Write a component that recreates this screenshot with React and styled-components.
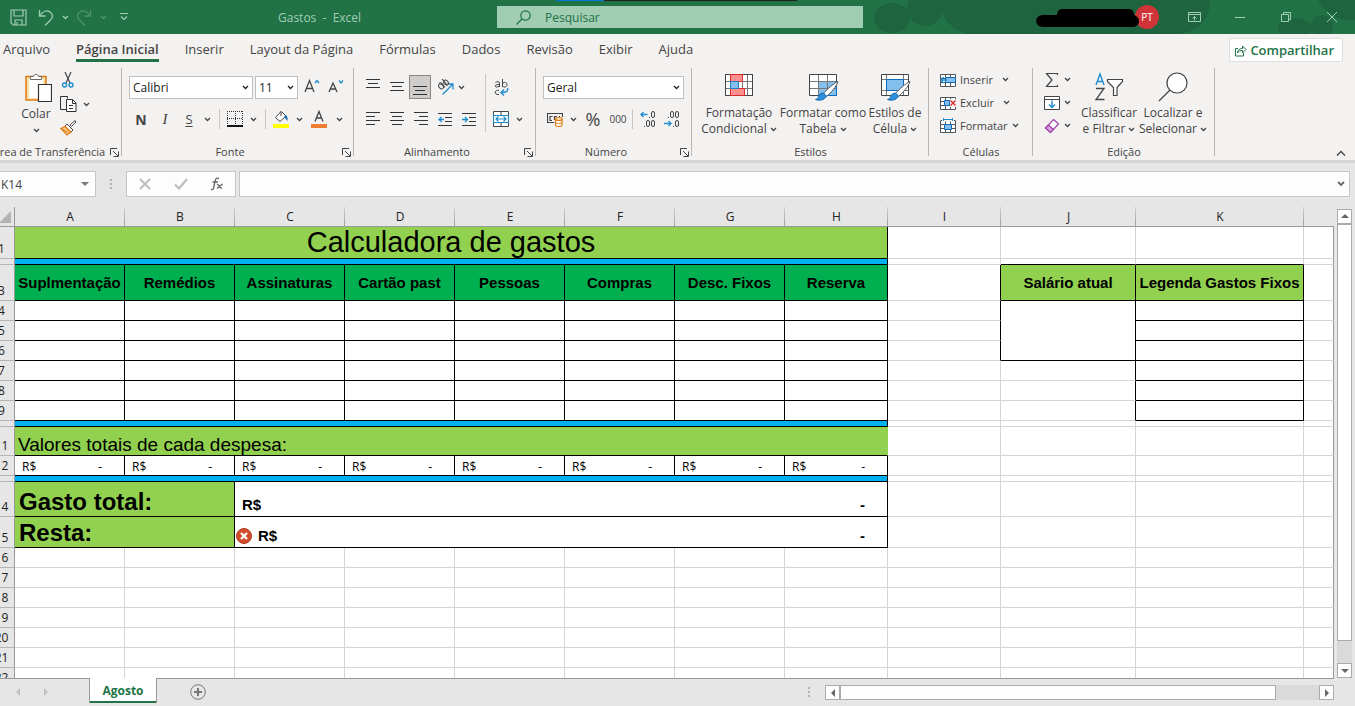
import React from "react";
import styled, { createGlobalStyle, css } from "styled-components";

const UI_FONT = '"Open Sans", "Noto Sans", sans-serif';
const INK = "#444444";
const BLUE = "#1e8bcd";
const GREEN = "#217346";

const GlobalStyle = createGlobalStyle`
  *, *::before, *::after { box-sizing: border-box; }
  body { margin: 0; overflow: hidden; font-family: ${UI_FONT}; font-size: 12px; color: ${INK}; background: #e6e6e6; }
  button, input, select { font: inherit; color: inherit; margin: 0; padding: 0; border: 0; background: none; outline: none; }
  svg { display: block; flex: none; }
`;

/* ---------- shell ---------- */
const Shell = styled.div`
  display: flex;
  flex-direction: column;
  height: 100vh;
  overflow: hidden;
`;

/* ---------- title bar ---------- */
const TitleBar = styled.header`
  position: relative;
  display: grid;
  grid-template-columns: 497fr 366fr 492fr;
  align-items: center;
  height: 34px;
  flex: none;
  background: ${GREEN};
  color: #a0cdb4;
`;
const TopStrip = styled.div`
  position: absolute;
  top: 0;
  left: 41%;
  width: 241px;
  height: 1px;
  background: linear-gradient(90deg, #0078d7 48px, #1f1f1f 48px);
`;
const Decoration = styled.svg`
  position: absolute;
  top: 0;
  right: 0;
  height: 34px;
  width: 485px;
`;
const QuickAccess = styled.div`
  display: flex;
  align-items: center;
  padding-left: 5px;
`;
const QuickButton = styled.button`
  display: flex;
  align-items: center;
  justify-content: center;
  width: ${(p) => p.$w}px;
  height: 32px;
  opacity: ${(p) => (p.disabled ? 0.35 : 1)};
`;
const DocTitle = styled.h1`
  flex: 1;
  margin: 0 0 0 137px;
  font-size: 12px;
  font-weight: 400;
  white-space: pre;
`;
const SearchBox = styled.label`
  position: relative;
  display: flex;
  align-items: center;
  gap: 14px;
  height: 22px;
  padding-left: 19px;
  background: #a0cdb4;
  color: ${GREEN};
  input { flex: 1; min-width: 0; height: 22px; }
  input::placeholder { color: ${GREEN}; opacity: 1; }
`;
const WindowArea = styled.div`
  position: relative;
  display: flex;
  align-items: center;
  justify-content: flex-end;
`;
const Avatar = styled.div`
  display: grid;
  place-items: center;
  width: 24px;
  height: 24px;
  margin-left: -5px;
  margin-right: 12px;
  border-radius: 50%;
  background: #d13438;
  color: #fff;
  font-size: 10px;
`;
const Redaction = styled.svg`
  position: relative;
  z-index: 1;
`;
const WindowButton = styled.button`
  display: grid;
  place-items: center;
  width: 46px;
  height: 32px;
  color: #a0cdb4;
`;

/* ---------- ribbon ---------- */
const TabBar = styled.nav`
  display: flex;
  align-items: center;
  flex: none;
  height: 32px;
  padding: 0 12px 0 3px;
  gap: 26px;
  background: #f3f2f1;
  font-size: 13px;
`;
const TabLink = styled.a`
  padding: 2px 0 1px;
  line-height: 18px;
  color: ${INK};
  text-decoration: none;
  white-space: nowrap;
  border-bottom: 3px solid transparent;
  ${(p) =>
    p.$active &&
    css`
      font-weight: 600;
      border-color: ${GREEN};
    `}
`;
const ShareButton = styled.button`
  display: flex;
  align-items: center;
  gap: 3px;
  height: 24px;
  margin-left: auto;
  padding: 0 8px 0 4px;
  background: #fff;
  border: 1px solid #e1dfdd;
  border-radius: 2px;
  color: ${GREEN};
  font-weight: 600;
`;
const Ribbon = styled.section`
  display: flex;
  flex: none;
  height: 97px;
  padding-top: 2px;
  background: #f3f2f1;
  border-bottom: 3px solid #d4d4d4;
  overflow: hidden;
`;
const Group = styled.section`
  display: flex;
  flex-direction: column;
  flex: none;
  width: ${(p) => p.$w}px;
  margin-left: ${(p) => p.$shift || 0}px;
  background: linear-gradient(#b8b6b4, #b8b6b4) right top / 1px 88px no-repeat;
`;
const GroupBody = styled.div`
  display: flex;
  flex: 1;
  padding-left: ${(p) => p.$pad}px;
`;
const GroupFooter = styled.div`
  display: flex;
  align-items: center;
  height: 16px;
  font-size: 11px;
  span { flex: 1; text-align: center; line-height: 16px; white-space: nowrap; }
  button { width: 16px; height: 16px; display: grid; place-items: center; }
`;
const Stack = styled.div`
  display: flex;
  flex-direction: column;
  gap: ${(p) => p.$gap || 0}px;
  padding-top: ${(p) => p.$top || 0}px;
  width: ${(p) => (p.$w ? p.$w + "px" : "auto")};
`;
const Row = styled.div`
  display: flex;
  align-items: center;
  height: 24px;
  gap: ${(p) => p.$gap || 0}px;
`;
const Tool = styled.button`
  display: flex;
  align-items: center;
  justify-content: center;
  gap: 4px;
  flex: none;
  width: ${(p) => p.$w || 24}px;
  height: ${(p) => p.$h || 24}px;
  font-size: ${(p) => p.$size || 12}px;
  font-weight: ${(p) => (p.$bold ? 700 : 400)};
  font-style: ${(p) => (p.$italic ? "italic" : "normal")};
  font-family: ${(p) => (p.$italic ? '"Liberation Serif", serif' : "inherit")};
  text-decoration: ${(p) => (p.$underline ? "underline" : "none")};
  text-underline-offset: 2px;
  white-space: nowrap;
  ${(p) =>
    p.$pressed &&
    css`
      background: #cfcdcb;
      box-shadow: inset 0 0 0 1px #8a8886;
    `}
`;
const LineTool = styled(Tool)`
  justify-content: flex-start;
  width: auto;
  height: 23px;
  font-size: 11px;
  span { margin-right: ${(p) => p.$gap || 0}px; }
`;
const BigTool = styled.button`
  display: flex;
  flex-direction: column;
  align-items: center;
  flex: none;
  width: ${(p) => p.$w}px;
  padding-top: 4px;
  line-height: 16px;
  white-space: nowrap;
  svg { margin-bottom: 3px; }
`;
const CaptionRow = styled.span`
  display: flex;
  align-items: center;
  gap: 3px;
  height: 16px;
  svg { margin: 0; }
`;
const Divider = styled.span`
  width: 1px;
  height: ${(p) => p.$h || 20}px;
  margin: ${(p) => p.$m || "0 3px 0 6px"};
  background: #c8c6c4;
`;
const PickBox = styled.label`
  display: inline-grid;
  align-items: center;
  width: ${(p) => p.$w}px;
  height: 23px;
  background: #fff;
  border: 1px solid #c1bfbd;
  color: #222;
  select, svg { grid-area: 1 / 1; }
  select { appearance: none; width: 100%; height: 21px; padding-left: 3px; }
  svg { justify-self: end; margin-right: 3px; pointer-events: none; }
`;
const CollapseButton = styled.button`
  align-self: flex-end;
  margin: 0 7px 0 auto;
  padding: 4px 2px;
`;

/* ---------- formula bar ---------- */
const FormulaBar = styled.section`
  display: flex;
  flex: none;
  height: 44px;
  padding: 8px 5px 10px 0;
`;
const Framed = styled.div`
  display: flex;
  align-items: center;
  height: 26px;
  background: #fdfdfd;
  border: 1px solid #c6c6c6;
`;
const NameBox = styled(Framed)`
  width: 97px;
  margin-left: -1px;
  padding-right: 6px;
  input { width: 100%; padding-left: 1px; min-width: 0; }
`;
const FormulaButtons = styled(Framed)`
  width: 110px;
  button { flex: 1; display: grid; place-items: center; height: 24px; }
`;
const FormulaInput = styled(Framed)`
  flex: 1;
  margin-left: 3px;
  padding-right: 4px;
  input { flex: 1; padding: 0 6px; }
`;
const DotHandle = styled.div`
  display: flex;
  flex-direction: column;
  justify-content: center;
  align-items: center;
  gap: 2px;
  width: ${(p) => p.$w}px;
  i { width: 2px; height: 2px; background: #b0b0b0; }
`;

/* ---------- sheet ---------- */
const SheetArea = styled.main`
  display: flex;
  flex: 1;
  min-height: 0;
`;
const SheetView = styled.div`
  flex: 1;
  min-width: 0;
  overflow: hidden;
`;
const SheetTable = styled.table`
  width: calc(100% + 11px);
  margin-left: -11px;
  table-layout: fixed;
  border-collapse: separate;
  border-spacing: 0;
  color: #000;
`;
const Col = styled.col`
  width: ${(p) => (p.$w ? p.$w + "px" : "auto")};
`;
const ColHead = styled.th`
  height: 20px;
  padding: 0;
  font-weight: 400;
  line-height: 18px;
  color: #222;
  background: linear-gradient(#d0d0d0, #a0a0a0) right top / 1px 100% no-repeat #e6e6e6;
  border-bottom: 1px solid #999;
  &:last-child { background: #e6e6e6; }
`;
const RowHead = styled.th`
  height: ${(p) => p.$h}px;
  padding: 0;
  font-weight: 400;
  line-height: ${(p) => (p.$h < 10 ? 4 : 18)}px;
  color: #222;
  vertical-align: bottom;
  background: #e6e6e6;
  border-right: 1px solid #999;
  border-bottom: 1px solid #b5b5b5;
`;
const Corner = styled(ColHead)`
  background: #e6e6e6;
  border-right: 1px solid #999;
  svg { margin-left: auto; margin-right: 3px; }
`;
const Cell = styled.td`
  padding: 0;
  background: ${(p) => p.$bg || "#fff"};
  border-right: 1px solid ${(p) => p.$r || "#d4d4d4"};
  border-bottom: 1px solid ${(p) => p.$b || "#d4d4d4"};
  font-family: "Liberation Sans", Arial, sans-serif;
  line-height: 1;
  white-space: nowrap;
  &:last-child { border-right-color: #999; }
`;
const TitleCell = styled(Cell)`
  font-size: 29px;
  text-align: center;
`;
const HeadingCell = styled(Cell)`
  font-size: 15px;
  font-weight: 700;
  text-align: center;
`;
const SectionCell = styled(Cell)`
  font-size: 19px;
  padding: 7px 0 0 3px;
`;
const TotalLabelCell = styled(Cell)`
  font-size: 24px;
  font-weight: 700;
  padding: ${(p) => p.$top}px 0 0 4px;
`;
const Money = styled.div`
  display: flex;
  align-items: center;
  justify-content: space-between;
  padding: 2px 22px 0 7px;
  line-height: 16px;
  font-family: ${UI_FONT};
`;
const BigMoney = styled(Money)`
  justify-content: flex-start;
  gap: 6px;
  padding: ${(p) => p.$top}px 22px 0 ${(p) => p.$left}px;
  font-family: "Liberation Sans", Arial, sans-serif;
  font-size: 15px;
  font-weight: 700;
  span:last-child { margin-left: auto; }
`;
const VScroll = styled.div`
  display: flex;
  flex-direction: column;
  flex: none;
  width: 21px;
  padding: 2px 3px 0 3px;
`;
const ScrollButton = styled.button`
  display: grid;
  place-items: center;
  flex: none;
  width: 15px;
  height: 15px;
  background: #fff;
  border: 1px solid #ababab;
`;
const Track = styled.div`
  display: flex;
  flex-direction: ${(p) => (p.$row ? "row" : "column")};
  flex: 1;
  background: #dadada;
`;
const Thumb = styled.div`
  flex: 0 0 ${(p) => p.$size}%;
  background: #fff;
  border: 1px solid #ababab;
`;

/* ---------- sheet tabs ---------- */
const BottomBar = styled.footer`
  display: flex;
  flex: none;
  height: 28px;
  padding-right: 21px;
  background: linear-gradient(#999, #999) left top / calc(100% - 21px) 1px no-repeat #e6e6e6;
`;
const NavArrows = styled.div`
  display: flex;
  align-items: center;
  width: 89px;
  padding: 0 0 1px 4px;
  button { width: 28px; height: 20px; display: grid; place-items: center; }
`;
const SheetTab = styled.a`
  height: 25px;
  width: 68px;
  text-align: center;
  line-height: 26px;
  font-weight: 700;
  color: ${GREEN};
  text-decoration: none;
  background: #fff;
  border: solid #999;
  border-width: 0 1px;
  box-shadow: inset 0 -2px 0 ${GREEN};
`;
const AddSheet = styled.button`
  width: 82px;
  display: grid;
  place-items: center;
`;
const HScroll = styled.div`
  display: flex;
  width: 509px;
  height: 15px;
  margin-top: 7px;
`;
const Spacer = styled.div`
  flex: 1;
`;

/* ---------- drawings ---------- */
const Icon = ({ w = 16, h = w, children, ...rest }) => (
  <svg width={w} height={h} viewBox={`0 0 ${w} ${h}`} fill="none" stroke={INK} strokeWidth="1" aria-hidden="true" {...rest}>
    {children}
  </svg>
);
const Chevron = ({ color = INK }) => (
  <Icon w={7} h={5} stroke={color} strokeWidth="1.3">
    <path d="M1 1l2.5 2.5L6 1" />
  </Icon>
);
const Launcher = () => (
  <Icon w={9}>
    <path d="M.5 7V.5H7M3 3l5 5M8.500 3.500v5h-5" />
  </Icon>
);
const Lines = ({ rows }) => (
  <Icon w={14} h={16} stroke="#333">
    {rows.map(([x1, x2, y]) => (
      <path key={y} d={`M${x1} ${y}.5H${x2}`} />
    ))}
  </Icon>
);
const Triangle = ({ dir, color = "#666" }) => {
  const d = { up: "M0 5L4 1l4 4z", down: "M0 2h8L4 6z", left: "M6 0v8L2 4z", right: "M2 0v8l4-4z" }[dir];
  return (
    <Icon w={8} stroke="none">
      <path d={d} fill={color} />
    </Icon>
  );
};
const Brush = () => (
  <>
    <path d="M31 9.500c-3 1-12 8.500-14.500 12l3 3C23 21.500 30 14 31 9.500z" fill="#fff" stroke="#555" />
    <path d="M16.500 21c-3 0-4.500 2-5 4-.5 1.500-1.500 2-3 2.500 4 1.500 9.500.5 11-3.500z" fill="#2f8fd8" stroke="#0f6cbd" />
  </>
);
const GridIcon = ({ children }) => (
  <Icon w={32} h={30} stroke="#777">
    <path d="M2.500 2.500h27v21h-27z" fill="#fff" stroke="#444" />
    {children}
  </Icon>
);
const ConditionalIcon = () => (
  <GridIcon>
    <path d="M7.500 3v20M19.500 3v20M24.500 3v20M3 9.500h26M3 16.500h26" />
    <path d="M2.500 2.500h27v21h-27z" stroke="#444" />
    <path d="M7.500 2.500h12v7h-12zM7.500 16.500h14v7h-14z" fill="#ff8f8f" stroke="#d92b2b" />
    <path d="M7.500 9.500h8v7h-8z" fill="#83beec" stroke="#1e7fc8" />
  </GridIcon>
);
const TableIcon = () => (
  <GridIcon>
    <path d="M11.500 9.500h18v14h-18z" fill="#83beec" stroke="#0f6cbd" />
    <path d="M11.500 3v20M20.500 3v20M3 9.500h26M3 16.500h26" />
    <Brush />
  </GridIcon>
);
const CellStyleIcon = () => (
  <GridIcon>
    <path d="M7.500 3v20M24.500 3v20M3 7.500h26M3 18.500h26" />
    <path d="M7.500 7.500h17v11h-17z" fill="#83beec" stroke="#0f6cbd" />
    <Brush />
  </GridIcon>
);
const SmallGrid = ({ children }) => (
  <Icon>
    <path d="M.5 2.500h15v12H.5zM5.500 2.500v12M10.500 2.500v12M.5 6.500h15M.5 10.500h15" fill="#fff" stroke="#555" />
    {children}
  </Icon>
);
const SaveIcon = () => (
  <Icon w={17} stroke="#a0cdb4" strokeWidth="1.2">
    <path d="M1 1h15v15H3l-2-2zM4 1v6h9V1M5 16v-5h7v5M7 13v3" />
  </Icon>
);
const UndoIcon = ({ flip }) => (
  <Icon w={16} h={17} stroke="#a0cdb4" strokeWidth="1.300" transform={flip ? "scale(-1 1)" : undefined}>
    <path d="M1.500 1v6h6M2 6.500C5 2 9 1 12 3s3.500 5 .5 8L7 16.500" />
  </Icon>
);
const PasteIcon = () => (
  <Icon w={32} h={31}>
    <g transform="translate(4 0)">
      <path d="M2 4.500h20V28H2z" fill="#fbdfa8" stroke="#e07b13" strokeWidth="1.500" />
      <path d="M5 7h14v19H5z" fill="#fff" stroke="none" />
      <path d="M6.500 7.500v-3h3C10 1.500 14 1.500 14.500 4.500h3v3z" fill="#fff" stroke="#666" />
      <path d="M14.500 12.500h13v17h-13z" fill="#fff" stroke="#333" strokeWidth="1.200" />
    </g>
  </Icon>
);
const CutIcon = () => (
  <Icon w={14} h={16}>
    <path d="M4 0l5 11M10 0L5 11" stroke="#444" strokeWidth="1.200" />
    <circle cx="3.500" cy="13" r="2" stroke={BLUE} strokeWidth="1.400" />
    <circle cx="10" cy="13" r="2" stroke={BLUE} strokeWidth="1.400" />
  </Icon>
);
const CopyIcon = () => (
  <Icon w={17} h={16} stroke="#333">
    <path d="M6.500 13.500h-6V.5h7v2" />
    <path d="M6.500 3.500h6l3.500 3.500v8.500H6.500zM12.500 3.500v4H16M9 9.500h4M9 12.500h4" fill="#fff" />
  </Icon>
);
const PainterIcon = () => (
  <Icon>
    <path d="M15 .5l-5 4.500 1.500 1.500L15.800 2zM7 4l6 6-2 2-6-6z" fill="#fff" stroke="#444" />
    <path d="M5 6.500L.8 8.500 7 15l4-3z" fill="#fbc98a" stroke="#e07b13" strokeWidth="1.300" />
    <path d="M3 9.500l5 3" stroke="#e07b13" />
  </Icon>
);
const BordersIcon = () => (
  <Icon>
    <path d="M.5 0v14M15.500 0v14M8.500 0v14M0 .5h16M0 7.500h16" stroke="#333" strokeDasharray="1 1" />
    <path d="M0 15h16" stroke="#111" strokeWidth="2" />
  </Icon>
);
const FillIcon = () => (
  <Icon h={18}>
    <path d="M8 1.500L2.500 7.500l4.500 4 6-5.500-4-4M8 6V1" fill="#fff" stroke="#444" />
    <path d="M12 5c2 0 3 2 2.500 6-1.500-1-2-3-3.500-3.500z" fill="#1e6fb8" stroke="none" />
    <path d="M0 14h16v4H0z" fill="#ffff00" stroke="none" />
  </Icon>
);
const FontColorIcon = () => (
  <Icon h={18}>
    <path d="M4 11.500L8 1.500l4 10M5.300 8h5.400" stroke="#444" strokeWidth="1.300" />
    <path d="M0 14h16v4H0z" fill="#ed7d31" stroke="none" />
  </Icon>
);
const FontSizeIcon = ({ grow }) => (
  <Icon w={16} h={18}>
    {grow ? (
      <path d="M1 14L5.500 2.500 10 14M2.500 10.500h6" strokeWidth="1.300" />
    ) : (
      <path d="M1 14l4-9 4 9M2.500 11h5" strokeWidth="1.300" />
    )}
    <path d={grow ? "M11 5l2-2.500L15 5" : "M11 2.500L13 5l2-2.500"} stroke={BLUE} strokeWidth="1.300" />
  </Icon>
);
const OrientationIcon = () => (
  <Icon w={17} h={17}>
    <path d="M5.500 15.500L15.500 5.500M10.500 5h5.500v5.500" stroke={BLUE} strokeWidth="1.300" />
    <ellipse cx="4" cy="7.500" rx="2" ry="2.800" transform="rotate(-45 4 7.500)" />
    <path d="M2 4.500C3.500 3 5 4 6.500 6.500L8 8.500M5 0l5.500 6.500" strokeWidth="1.100" />
    <ellipse cx="9" cy="3.500" rx="2" ry="2.800" transform="rotate(-45 9 3.500)" />
  </Icon>
);
const WrapIcon = () => (
  <Icon w={15} h={17}>
    <path d="M1.500 3.500c1-1.200 4-1.200 4 .6V8M5.500 5.500c-5.500-.3-5 2.700-2.500 2.500 1.500 0 2.500-1 2.500-2.500M8.500 0v8M8.500 5c1-2.500 4.500-2 4.500 .7S9.500 9 8.500 6.500M5 11.500c-5-1.500-5 5 0 4" />
    <path d="M13.500 9c1 3.500-2 4.500-6 4.500M10 10.500l-3 3 3 3" stroke={BLUE} strokeWidth="1.400" />
  </Icon>
);
const MergeIcon = () => (
  <Icon>
    <path d="M.5 .5h15v15H.5zM8 .5v4M8 11.500v4" fill="#fff" stroke="#444" />
    <path d="M.5 4.500h15v7H.5zM3 8h10M5.500 5.500L3 8l2.500 2.500M10.500 5.500L13 8l-2.500 2.500" fill="#fff" stroke={BLUE} strokeWidth="1.200" />
  </Icon>
);
const IndentIcon = ({ inward }) => (
  <Icon w={15} h={16}>
    <path d="M0 2.500h14M7 6.500h7M7 10.500h7M0 14.500h14" stroke="#333" />
    <path d={inward ? "M0 8.500h5M3 6l2.500 2.500L3 11" : "M6 8.500H1M3.500 6L1 8.500 3.500 11"} stroke={BLUE} strokeWidth="1.300" />
  </Icon>
);
const CurrencyIcon = () => (
  <Icon>
    <path d="M15.500 6V2.500H.5v9H7" stroke="#444" strokeWidth="1.200" />
    <path d="M5.500 5.500H3v4h2M7.500 9V5.500H10M13 5.500h-1" stroke="#444" strokeWidth="1.200" />
    <path d="M8.500 8v6c0 2 6.500 2 6.500 0V8" fill="#fff" stroke="#e07b13" strokeWidth="1.200" />
    <ellipse cx="11.800" cy="8" rx="3.300" ry="1.500" fill="#fbdfa8" stroke="#e07b13" strokeWidth="1.200" />
    <path d="M8.500 11c0 2 6.500 2 6.500 0" stroke="#e07b13" />
  </Icon>
);
const DecimalIcon = ({ more }) => (
  <Icon w={16} h={18}>
    <g strokeWidth="1">
      <rect x="11.500" y="1.500" width="3" height="6" rx="1.500" />
      <rect x="11.500" y="10.500" width="3" height="6" rx="1.500" />
      {more ? <rect x="6.500" y="10.500" width="3" height="6" rx="1.500" /> : <rect x="6.500" y="1.500" width="3" height="6" rx="1.500" />}
      <path d={more ? "M9 7.500h1M4 16.500h1" : "M4 7.500h1M9 16.500h1"} />
    </g>
    <path d={more ? "M7.500 4.500H1M3.500 2L1 4.500 3.500 7" : "M0 13.500h7M4.500 11L7 13.500 4.500 16"} stroke={BLUE} strokeWidth="1.300" />
  </Icon>
);
const SigmaIcon = () => (
  <Icon>
    <path d="M13.500 3V1.500h-11L8 8l-5.500 6.500h11V13" strokeWidth="1.200" />
  </Icon>
);
const FillDownIcon = () => (
  <Icon>
    <path d="M.5 1.500h15v13H.5zM.5 4.500h15" fill="#fff" />
    <path d="M8 5.500v7M5 9.500l3 3 3-3" stroke={BLUE} strokeWidth="1.400" />
  </Icon>
);
const EraserIcon = () => (
  <Icon>
    <path d="M9.500 1.500l5 4.500-8 8.500-5-4.500z" fill="#fff" stroke="#a33fae" strokeWidth="1.200" />
    <path d="M4.500 7l5 4.500-3 3-5-4.500z" fill="#d9a3df" stroke="#a33fae" strokeWidth="1.200" />
  </Icon>
);
const SortIcon = () => (
  <Icon w={30} h={30}>
    <path d="M2 13L6 2l4 11M3.500 9.500h5" stroke={BLUE} strokeWidth="1.400" />
    <path d="M2 16.500h8L2 27.500h8.500" strokeWidth="1.300" />
    <path d="M13.500 7.500h15v2l-5.500 6v8h-3.500v-8l-6-6z" fill="#fff" strokeWidth="1.200" />
  </Icon>
);
const FindIcon = () => (
  <Icon w={30} h={30} strokeWidth="1.200">
    <circle cx="19" cy="11" r="10" fill="#fff" />
    <path d="M12 18L1 29" />
  </Icon>
);
const ShareIcon = () => (
  <Icon w={13} h={13} stroke={GREEN}>
    <path d="M4 4.500H1.500v7.500h8V9M3.500 9c0-3 2-4.500 5-4.500V2L12 5.500 8.500 9V6.500c-2 0-4 .5-5 2.500z" />
  </Icon>
);
const ErrorIcon = () => (
  <Icon stroke="none">
    <circle cx="8" cy="8" r="7.500" fill="#d14d2e" stroke="#b03d20" />
    <path d="M5 5l6 6M11 5l-6 6" stroke="#fff" strokeWidth="2.300" />
  </Icon>
);

/* ---------- sheet data ---------- */
const K = "#000";
const LIME = "#92d050";
const SKY = "#00b0f0";
const COLUMNS = [["A", 110], ["B", 110], ["C", 110], ["D", 110], ["E", 110], ["F", 110], ["G", 110], ["H", 103], ["I", 113], ["J", 135], ["K", 168]];
const HEADINGS = ["Suplmentação", "Remédios", "Assinaturas", "Cartão past", "Pessoas", "Compras", "Desc. Fixos", "Reserva"];
const EXPENSES = HEADINGS.map((name) => ({ name, total: "-" }));

const Blank = ({ n }) => Array.from({ length: n }, (_, i) => <Cell key={i} />);

function SheetRow({ n, h, children }) {
  return (
    <tr>
      <RowHead scope="row" $h={h}>{h < 10 ? "" : n}</RowHead>
      {children}
    </tr>
  );
}

function Sheet() {
  return (
    <SheetTable>
      <colgroup>
        <Col $w={26} />
        {COLUMNS.map(([name, w]) => <Col key={name} $w={w} />)}
        <Col />
      </colgroup>
      <thead>
        <tr>
          <Corner aria-label="Selecionar tudo">
            <Icon w={12} h={12} stroke="none"><path d="M12 0v12H0z" fill="#b4b4b4" /></Icon>
          </Corner>
          {COLUMNS.map(([name]) => <ColHead key={name} scope="col">{name}</ColHead>)}
          <ColHead />
        </tr>
      </thead>
      <tbody>
        <SheetRow n={1} h={32}>
          <TitleCell colSpan={8} $bg={LIME} $r={K} $b={K}>Calculadora de gastos</TitleCell>
          <Blank n={4} />
        </SheetRow>
        <SheetRow n={2} h={6}>
          <Cell colSpan={8} $bg={SKY} $r={K} $b={K} />
          <Cell /><Cell $b={K} /><Cell $b={K} /><Cell />
        </SheetRow>
        <SheetRow n={3} h={36}>
          {HEADINGS.map((t) => <HeadingCell key={t} $bg="#00b050" $r={K} $b={K}>{t}</HeadingCell>)}
          <Cell $r={K} />
          <HeadingCell $bg={LIME} $r={K} $b={K}>Salário atual</HeadingCell>
          <HeadingCell $bg={LIME} $r={K} $b={K}>Legenda Gastos Fixos</HeadingCell>
          <Cell />
        </SheetRow>
        {[4, 5, 6, 7, 8, 9].map((n) => (
          <SheetRow key={n} n={n} h={20}>
            {HEADINGS.map((t) => <Cell key={t} $r={K} $b={K} />)}
            <Cell $r={n < 7 ? K : undefined} />
            {n === 4 && <Cell rowSpan={3} $r={K} $b={K} />}
            {n > 6 && <Cell $r={K} />}
            <Cell $r={K} $b={K} />
            <Cell />
          </SheetRow>
        ))}
        <SheetRow n={10} h={6}>
          <Cell colSpan={8} $bg={SKY} $r={K} $b={K} />
          <Blank n={4} />
        </SheetRow>
        <SheetRow n={11} h={29}>
          <SectionCell colSpan={8} $bg={LIME} $r={LIME} $b={K}>Valores totais de cada despesa:</SectionCell>
          <Blank n={4} />
        </SheetRow>
        <SheetRow n={12} h={20}>
          {EXPENSES.map((e) => (
            <Cell key={e.name} $r={K} $b={K}>
              <Money><span>R$</span><span>{e.total}</span></Money>
            </Cell>
          ))}
          <Blank n={4} />
        </SheetRow>
        <SheetRow n={13} h={6}>
          <Cell colSpan={8} $bg={SKY} $r={K} $b={K} />
          <Blank n={4} />
        </SheetRow>
        <SheetRow n={14} h={35}>
          <TotalLabelCell colSpan={2} $bg={LIME} $r={K} $b={K} $top={6}>Gasto total:</TotalLabelCell>
          <Cell colSpan={6} $r={K} $b={K}>
            <BigMoney $top={12} $left={7}><span>R$</span><span>-</span></BigMoney>
          </Cell>
          <Blank n={4} />
        </SheetRow>
        <SheetRow n={15} h={31}>
          <TotalLabelCell colSpan={2} $bg={LIME} $r={K} $b={K} $top={2}>Resta:</TotalLabelCell>
          <Cell colSpan={6} $r={K} $b={K}>
            <BigMoney $top={7} $left={1}><ErrorIcon /><span>R$</span><span>-</span></BigMoney>
          </Cell>
          <Blank n={4} />
        </SheetRow>
        {[16, 17, 18, 19, 20, 21, 22].map((n) => (
          <SheetRow key={n} n={n} h={20}><Blank n={12} /></SheetRow>
        ))}
      </tbody>
    </SheetTable>
  );
}

/* ---------- ribbon parts ---------- */
function RibbonGroup({ label, w, pad = 7, shift, launcher, children }) {
  return (
    <Group $w={w} $shift={shift} aria-label={label}>
      <GroupBody $pad={pad}>{children}</GroupBody>
      <GroupFooter>
        <span>{label}</span>
        {launcher && <button aria-label={`Opções de ${label}`}><Launcher /></button>}
      </GroupFooter>
    </Group>
  );
}
const Drop = ({ label }) => <Tool $w={12} aria-label={label}><Chevron /></Tool>;
const Big = ({ w, icon, a, b }) => (
  <BigTool $w={w}>
    {icon}
    <span>{a}</span>
    <CaptionRow>{b}<Chevron /></CaptionRow>
  </BigTool>
);
const Pick = ({ w, label, value }) => (
  <PickBox $w={w}>
    <select aria-label={label} defaultValue={value}><option>{value}</option></select>
    <Chevron color="#222" />
  </PickBox>
);

const TABS = ["Arquivo", "Página Inicial", "Inserir", "Layout da Página", "Fórmulas", "Dados", "Revisão", "Exibir", "Ajuda"];

export default function App() {
  return (
    <Shell>
      <GlobalStyle />
      <TitleBar>
        <Decoration viewBox="0 0 485 34" preserveAspectRatio="xMaxYMid slice" aria-hidden="true">
          <g fill="#1e643e">
            <ellipse cx="22" cy="18" rx="18" ry="15" />
            <circle cx="55" cy="8" r="18" />
            <path d="M70 0h270c0 20-10 30-30 34H96C78 28 70 14 70 0z" />
            <ellipse cx="425" cy="28" rx="17" ry="10" />
            <circle cx="452" cy="26" r="11" />
            <path d="M448 0h37v20c-14 2-30-6-37-20z" />
          </g>
        </Decoration>
        <TopStrip />
        <QuickAccess>
          <QuickButton $w={26} aria-label="Salvar"><SaveIcon /></QuickButton>
          <QuickButton $w={30} aria-label="Desfazer"><UndoIcon /></QuickButton>
          <QuickButton $w={8} aria-label="Opções de desfazer"><Chevron color="#a0cdb4" /></QuickButton>
          <QuickButton $w={30} disabled aria-label="Refazer"><UndoIcon flip /></QuickButton>
          <QuickButton $w={8} disabled aria-label="Opções de refazer"><Chevron color="#a0cdb4" /></QuickButton>
          <QuickButton $w={34} aria-label="Personalizar barra">
            <Icon w={8} h={8} stroke="#a0cdb4"><path d="M0 .5h8M1 3.500l3 3 3-3" strokeWidth="1.200" /></Icon>
          </QuickButton>
          <DocTitle>{"Gastos  -  Excel"}</DocTitle>
        </QuickAccess>
        <SearchBox>
          <Icon w={15} stroke={GREEN} strokeWidth="1.200"><circle cx="9.500" cy="5.500" r="4.700" /><path d="M6 9L.5 14.500" /></Icon>
          <input type="search" placeholder="Pesquisar" aria-label="Pesquisar" />
        </SearchBox>
        <WindowArea>
          <Redaction width="104" height="20" viewBox="0 0 104 20" aria-hidden="true">
            <path d="M7 8h14c0-4 2-6 6-6h65c4 0 6 2 6 6 3 1 5 3 5 6 0 4-3 6-7 6H7c-9 0-9-12 0-12z" fill="#000" />
          </Redaction>
          <Avatar>PT</Avatar>
          <WindowButton aria-label="Opções da faixa">
            <Icon w={13} h={11} stroke="#a0cdb4"><path d="M.5.5h12v9H.5zM.5 2.500h12M6.500 8.500v-4M4.500 6.500l2-2 2 2" /></Icon>
          </WindowButton>
          <WindowButton aria-label="Minimizar"><Icon w={10} h={3} stroke="#a0cdb4"><path d="M0 1.500h10" /></Icon></WindowButton>
          <WindowButton aria-label="Restaurar">
            <Icon w={10} stroke="#a0cdb4"><path d="M.5 2.500h7v7h-7zM2.500 2V.5h7v7H8" /></Icon>
          </WindowButton>
          <WindowButton aria-label="Fechar"><Icon w={10} stroke="#a0cdb4"><path d="M0 0l10 10M10 0L0 10" /></Icon></WindowButton>
        </WindowArea>
      </TitleBar>

      <TabBar>
        {TABS.map((t) => <TabLink key={t} href="#" $active={t === "Página Inicial"}>{t}</TabLink>)}
        <ShareButton><ShareIcon />Compartilhar</ShareButton>
      </TabBar>

      <Ribbon>
        <RibbonGroup label="Área de Transferência" w={130} shift={-8} pad={24} launcher>
          <BigTool $w={40}><PasteIcon /><span>Colar</span><CaptionRow><Chevron /></CaptionRow></BigTool>
          <Stack>
            <Tool aria-label="Recortar"><CutIcon /></Tool>
            <Row><Tool aria-label="Copiar"><CopyIcon /></Tool><Drop label="Opções de copiar" /></Row>
            <Tool aria-label="Pincel de formatação"><PainterIcon /></Tool>
          </Stack>
        </RibbonGroup>

        <RibbonGroup label="Fonte" w={232} launcher>
          <Stack $top={7} $gap={8}>
            <Row $gap={2}>
              <Pick w={124} label="Fonte" value="Calibri" />
              <Pick w={43} label="Tamanho" value="11" />
              <Row>
                <Tool aria-label="Aumentar fonte"><FontSizeIcon grow /></Tool>
                <Tool aria-label="Diminuir fonte"><FontSizeIcon /></Tool>
              </Row>
            </Row>
            <Row>
              <Tool $bold $size={14}>N</Tool>
              <Tool $italic $size={15}>I</Tool>
              <Tool $underline $size={13}>S</Tool>
              <Drop label="Opções de sublinhado" />
              <Divider />
              <Tool aria-label="Bordas"><BordersIcon /></Tool>
              <Drop label="Opções de bordas" />
              <Divider />
              <Tool aria-label="Cor de preenchimento"><FillIcon /></Tool>
              <Drop label="Opções de preenchimento" />
              <Tool $w={28} aria-label="Cor da fonte"><FontColorIcon /></Tool>
              <Drop label="Opções de cor" />
            </Row>
          </Stack>
        </RibbonGroup>

        <RibbonGroup label="Alinhamento" w={182} launcher>
          <Stack $top={7} $gap={8} $w={124}>
            <Row>
              <Tool aria-label="Alinhar acima"><Lines rows={[[0, 14, 0], [2, 12, 4], [0, 14, 8]]} /></Tool>
              <Tool aria-label="Alinhar no meio"><Lines rows={[[0, 14, 3], [2, 12, 7], [0, 14, 11]]} /></Tool>
              <Tool $w={22} $pressed aria-label="Alinhar abaixo"><Lines rows={[[0, 14, 7], [2, 12, 11], [0, 14, 15]]} /></Tool>
              <Tool $w={40} aria-label="Orientação"><OrientationIcon /><Chevron /></Tool>
            </Row>
            <Row>
              <Tool aria-label="Alinhar à esquerda"><Lines rows={[[0, 14, 1], [0, 9, 5], [0, 14, 9], [0, 9, 13]]} /></Tool>
              <Tool aria-label="Centralizar"><Lines rows={[[0, 14, 1], [2, 12, 5], [0, 14, 9], [2, 12, 13]]} /></Tool>
              <Tool aria-label="Alinhar à direita"><Lines rows={[[0, 14, 1], [5, 14, 5], [0, 14, 9], [5, 14, 13]]} /></Tool>
              <Tool aria-label="Diminuir recuo"><IndentIcon /></Tool>
              <Tool aria-label="Aumentar recuo"><IndentIcon inward /></Tool>
            </Row>
          </Stack>
          <Divider $h={58} $m="6px 3px 0 0" />
          <Stack $top={7} $gap={8}>
            <Tool aria-label="Quebrar texto"><WrapIcon /></Tool>
            <Row><Tool aria-label="Mesclar"><MergeIcon /></Tool><Drop label="Opções de mesclar" /></Row>
          </Stack>
        </RibbonGroup>

        <RibbonGroup label="Número" w={156} launcher>
          <Stack $top={7} $gap={8}>
            <Row><Pick w={141} label="Formato de número" value="Geral" /></Row>
            <Row>
              <Tool aria-label="Formato de contabilização"><CurrencyIcon /></Tool>
              <Drop label="Opções de moeda" />
              <Tool $w={28} $size={18}>%</Tool>
              <Tool $w={22} $size={10}>000</Tool>
              <Divider $m="0 3px" />
              <Tool aria-label="Aumentar casas decimais"><DecimalIcon more /></Tool>
              <Tool aria-label="Diminuir casas decimais"><DecimalIcon /></Tool>
            </Row>
          </Stack>
        </RibbonGroup>

        <RibbonGroup label="Estilos" w={237} pad={8}>
          <Big w={78} icon={<ConditionalIcon />} a="Formatação" b="Condicional" />
          <Big w={90} icon={<TableIcon />} a="Formatar como" b="Tabela" />
          <Big w={54} icon={<CellStyleIcon />} a="Estilos de" b="Célula" />
        </RibbonGroup>

        <RibbonGroup label="Células" w={104} pad={11}>
          <Stack>
            <LineTool $gap={5}>
              <SmallGrid><path d="M5.500 5.500h10v5h-10z" fill="#83beec" stroke="#0f6cbd" /><path d="M7 8H1M3.500 5L.8 8l2.700 3" stroke={BLUE} strokeWidth="1.300" /></SmallGrid>
              <span>Inserir</span><Chevron />
            </LineTool>
            <LineTool $gap={5}>
              <SmallGrid><path d="M4.500 5.500h5v5h-5z" fill="#83beec" stroke="#0f6cbd" /><path d="M10 4h6v8h-6z" fill="#f3f2f1" stroke="none" /><path d="M10.500 5.500l5 5M15.500 5.500l-5 5" stroke="#d92b2b" strokeWidth="1.300" /></SmallGrid>
              <span>Excluir</span><Chevron />
            </LineTool>
            <LineTool $gap={0}>
              <SmallGrid><path d="M4.500 6.500h7v5h-7z" fill="#83beec" stroke="#0f6cbd" /><path d="M2 0h12v3.500H2z" fill="#f3f2f1" stroke="none" /><path d="M3.500 0v3M12.500 0v3M3.500 1.500h9" stroke={BLUE} /></SmallGrid>
              <span>Formatar</span><Chevron />
            </LineTool>
          </Stack>
        </RibbonGroup>

        <RibbonGroup label="Edição" w={182} pad={6}>
          <Stack $w={40}>
            <Tool $w={36} $h={23} aria-label="AutoSoma"><SigmaIcon /><Chevron /></Tool>
            <Tool $w={36} $h={23} aria-label="Preencher"><FillDownIcon /><Chevron /></Tool>
            <Tool $w={36} $h={23} aria-label="Limpar"><EraserIcon /><Chevron /></Tool>
          </Stack>
          <Big w={60} icon={<SortIcon />} a="Classificar" b="e Filtrar" />
          <Big w={68} icon={<FindIcon />} a="Localizar e" b="Selecionar" />
        </RibbonGroup>

        <CollapseButton aria-label="Recolher a faixa de opções">
          <Icon w={10} h={6} strokeWidth="1.300"><path d="M1 5.500l4-4 4 4" /></Icon>
        </CollapseButton>
      </Ribbon>

      <FormulaBar>
        <NameBox>
          <input aria-label="Caixa de nome" defaultValue="K14" />
          <Triangle dir="down" color="#777" />
        </NameBox>
        <DotHandle $w={30}><i /><i /><i /></DotHandle>
        <FormulaButtons>
          <button aria-label="Cancelar"><Icon w={12} stroke="#bdbdbd" strokeWidth="1.800"><path d="M1 1l10 10M11 1L1 11" /></Icon></button>
          <button aria-label="Inserir"><Icon w={14} h={12} stroke="#bdbdbd" strokeWidth="2.200"><path d="M1 6.500L5 10.500 13 1" /></Icon></button>
          <button aria-label="Inserir função">
            <Icon w={14} h={14} stroke="#666" strokeWidth="1.400"><path d="M1 12.500c3 1 3-3 3.500-6S5.500 0 9 1.500M2.500 5H8M7 7.500c2-1 2.500 4.500 5 3.500M12.500 7L7 11.500" /></Icon>
          </button>
        </FormulaButtons>
        <FormulaInput>
          <input aria-label="Barra de fórmulas" />
          <Icon w={8} h={6} stroke="#666" strokeWidth="1.800"><path d="M1 1l3 3 3-3" /></Icon>
        </FormulaInput>
      </FormulaBar>

      <SheetArea>
        <SheetView><Sheet /></SheetView>
        <VScroll>
          <ScrollButton aria-label="Rolar para cima"><Triangle dir="up" /></ScrollButton>
          <Track><Thumb $size={95} /></Track>
          <ScrollButton aria-label="Rolar para baixo"><Triangle dir="down" /></ScrollButton>
        </VScroll>
      </SheetArea>

      <BottomBar>
        <NavArrows>
          <button aria-label="Planilha anterior"><Triangle dir="left" color="#c0c0c0" /></button>
          <button aria-label="Próxima planilha"><Triangle dir="right" color="#c0c0c0" /></button>
        </NavArrows>
        <SheetTab href="#">Agosto</SheetTab>
        <AddSheet aria-label="Nova planilha">
          <Icon w={16} stroke="#777"><circle cx="8" cy="8" r="7.300" /><path d="M8 4v8M4 8h8" strokeWidth="2" /></Icon>
        </AddSheet>
        <Spacer />
        <DotHandle $w={32}><i /><i /><i /></DotHandle>
        <HScroll>
          <ScrollButton aria-label="Rolar para a esquerda"><Triangle dir="left" /></ScrollButton>
          <Track $row><Thumb $size={91} /></Track>
          <ScrollButton aria-label="Rolar para a direita"><Triangle dir="right" /></ScrollButton>
        </HScroll>
      </BottomBar>
    </Shell>
  );
}
